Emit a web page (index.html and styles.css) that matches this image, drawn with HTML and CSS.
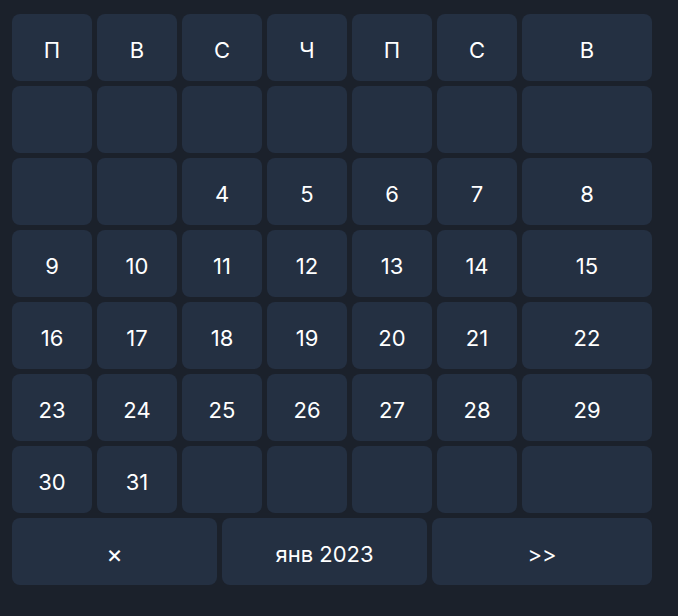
FILE: index.html
```html
<!DOCTYPE html>
<html lang="ru">
<head>
  <meta charset="UTF-8">
  <meta name="viewport" content="width=device-width, initial-scale=1.0">
  <title>Календарь</title>
  <link rel="stylesheet" href="styles.css">
</head>
<body>
  <div class="calendar">
    <div class="days">
      <div class="cell">П</div>
      <div class="cell">В</div>
      <div class="cell">С</div>
      <div class="cell">Ч</div>
      <div class="cell">П</div>
      <div class="cell">С</div>
      <div class="cell">В</div>

      <div class="cell"></div>
      <div class="cell"></div>
      <div class="cell"></div>
      <div class="cell"></div>
      <div class="cell"></div>
      <div class="cell"></div>
      <div class="cell"></div>

      <div class="cell"></div>
      <div class="cell"></div>
      <div class="cell">4</div>
      <div class="cell">5</div>
      <div class="cell">6</div>
      <div class="cell">7</div>
      <div class="cell">8</div>

      <div class="cell">9</div>
      <div class="cell">10</div>
      <div class="cell">11</div>
      <div class="cell">12</div>
      <div class="cell">13</div>
      <div class="cell">14</div>
      <div class="cell">15</div>

      <div class="cell">16</div>
      <div class="cell">17</div>
      <div class="cell">18</div>
      <div class="cell">19</div>
      <div class="cell">20</div>
      <div class="cell">21</div>
      <div class="cell">22</div>

      <div class="cell">23</div>
      <div class="cell">24</div>
      <div class="cell">25</div>
      <div class="cell">26</div>
      <div class="cell">27</div>
      <div class="cell">28</div>
      <div class="cell">29</div>

      <div class="cell">30</div>
      <div class="cell">31</div>
      <div class="cell"></div>
      <div class="cell"></div>
      <div class="cell"></div>
      <div class="cell"></div>
      <div class="cell"></div>
    </div>

    <div class="controls">
      <div class="cell close">×</div>
      <div class="cell">янв 2023</div>
      <div class="cell">&gt;&gt;</div>
    </div>
  </div>
</body>
</html>
```

FILE: styles.css
```css
body {
  margin: 0;
  padding: 14px 26px 0 12px;
  background-color: #1b212b;
  color: #ffffff;
  font-family: Inter, "Noto Sans", sans-serif;
  min-height: 100vh;
  box-sizing: border-box;
}

.calendar {
  display: flex;
  flex-direction: column;
  gap: 5px;
  width: 640px;
}

.days {
  display: grid;
  grid-template-columns: repeat(6, 80px) 130px;
  grid-auto-rows: 67px;
  gap: 5px;
}

.controls {
  display: grid;
  grid-template-columns: 205px 205px 220px;
  grid-auto-rows: 67px;
  gap: 5px;
}

.cell {
  display: flex;
  align-items: center;
  justify-content: center;
  padding-top: 4px;
  box-sizing: border-box;
  background-color: #243042;
  border-radius: 8px;
  font-size: 22px;
  font-weight: 400;
}

.close {
  font-size: 25px;
}
```
